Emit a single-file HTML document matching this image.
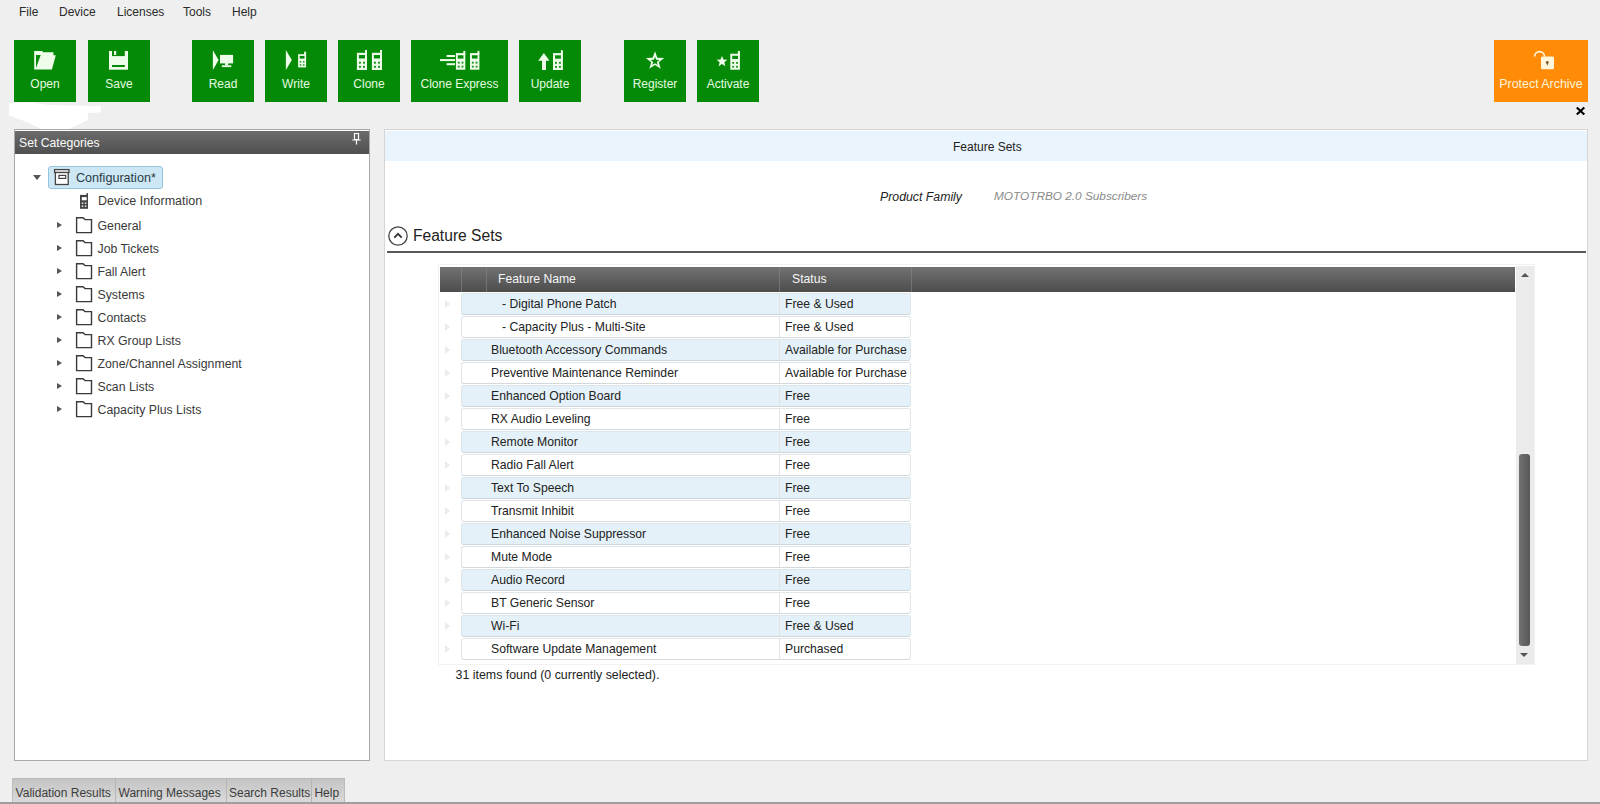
<!DOCTYPE html>
<html><head><meta charset="utf-8">
<style>
*{margin:0;padding:0;box-sizing:border-box}
html,body{width:1600px;height:804px;overflow:hidden;background:#efefef;font-family:"Liberation Sans",sans-serif;color:#222}
.a{position:absolute}
.t{position:absolute;line-height:1;white-space:pre}
.btn{position:absolute;top:40px;height:62px;background:#048a06}
.row{position:absolute;left:461px;width:450px;height:22px;border:1px solid #e2e6e8;border-bottom-color:#d3d8db;border-radius:3px}
.row.b{background:#e4f1f8;border-color:#dbe5ea;border-bottom-color:#cdd7dc}
.ind{position:absolute;left:445px;width:0;height:0;border-top:4px solid transparent;border-bottom:4px solid transparent;border-left:5px solid #ebebeb}
.tri{position:absolute;width:0;height:0;border-top:3.8px solid transparent;border-bottom:3.8px solid transparent;border-left:5.8px solid #555}
</style></head><body>
<div class="t" style="left:19px;top:6.14px;font-size:12px;color:#2a2a2a;">File</div>
<div class="t" style="left:59px;top:6.14px;font-size:12px;color:#2a2a2a;">Device</div>
<div class="t" style="left:117px;top:6.14px;font-size:12px;color:#2a2a2a;">Licenses</div>
<div class="t" style="left:183px;top:6.14px;font-size:12px;color:#2a2a2a;">Tools</div>
<div class="t" style="left:232px;top:6.14px;font-size:12px;color:#2a2a2a;">Help</div>
<div class="btn" style="left:14px;width:62px"></div>
<div class="t" style="left:14px;width:62px;top:77.54px;font-size:12px;color:#e6fbe0;text-align:center">Open</div>
<div class="btn" style="left:88px;width:62px"></div>
<div class="t" style="left:88px;width:62px;top:77.54px;font-size:12px;color:#e6fbe0;text-align:center">Save</div>
<div class="btn" style="left:192px;width:62px"></div>
<div class="t" style="left:192px;width:62px;top:77.54px;font-size:12px;color:#e6fbe0;text-align:center">Read</div>
<div class="btn" style="left:265px;width:62px"></div>
<div class="t" style="left:265px;width:62px;top:77.54px;font-size:12px;color:#e6fbe0;text-align:center">Write</div>
<div class="btn" style="left:338px;width:62px"></div>
<div class="t" style="left:338px;width:62px;top:77.54px;font-size:12px;color:#e6fbe0;text-align:center">Clone</div>
<div class="btn" style="left:411px;width:97px"></div>
<div class="t" style="left:411px;width:97px;top:77.54px;font-size:12px;color:#e6fbe0;text-align:center">Clone Express</div>
<div class="btn" style="left:519px;width:62px"></div>
<div class="t" style="left:519px;width:62px;top:77.54px;font-size:12px;color:#e6fbe0;text-align:center">Update</div>
<div class="btn" style="left:624px;width:62px"></div>
<div class="t" style="left:624px;width:62px;top:77.54px;font-size:12px;color:#e6fbe0;text-align:center">Register</div>
<div class="btn" style="left:697px;width:62px"></div>
<div class="t" style="left:697px;width:62px;top:77.54px;font-size:12px;color:#e6fbe0;text-align:center">Activate</div>
<div class="btn" style="left:1494px;width:94px;background:#ff8b06"></div>
<div class="t" style="left:1494px;width:94px;top:78.00px;font-size:12.4px;color:#fff4d8;text-align:center">Protect Archive</div>
<svg class="a" style="left:0;top:0" width="1600" height="130"><path d="M34.2,50.9 H42.2 L43.2,52.2 H53.4 V55.2 H55.8 L51.9,69.4 H34.2 Z" fill="#eefdea"/><path d="M36,55 H40.7 L36,67.9 Z" fill="#048a06"/><rect x="109" y="51" width="19" height="18.7" fill="#eefdea"/><rect x="112" y="51" width="12.8" height="5.1" fill="#048a06"/><rect x="114" y="51" width="2.2" height="4" fill="#eefdea"/><rect x="112" y="65" width="12.8" height="2" fill="#048a06"/><path d="M212.9,50.2 L218.6,59.9 L212.9,70 Z" fill="#eefdea"/><rect x="220" y="54.9" width="13.1" height="8.5" fill="#eefdea"/><rect x="225.1" y="63" width="3.1" height="2.5" fill="#eefdea"/><rect x="221.8" y="65.3" width="9.5" height="1.8" fill="#eefdea"/><path d="M285.9,50 L291.8,60.1 L285.9,70 Z" fill="#eefdea"/><rect x="298.1" y="54.2" width="8" height="13.2" fill="#eefdea"/><rect x="304.1" y="51.7" width="2" height="3.5" fill="#eefdea"/><rect x="299.70" y="55.92" width="4.80" height="2.64" fill="#048a06"/><rect x="299.70" y="61.06" width="1.60" height="1.45" fill="#048a06" opacity="0.9"/><rect x="299.70" y="64.23" width="1.60" height="1.45" fill="#048a06" opacity="0.9"/><rect x="302.90" y="61.06" width="1.60" height="1.45" fill="#048a06" opacity="0.9"/><rect x="302.90" y="64.23" width="1.60" height="1.45" fill="#048a06" opacity="0.9"/><rect x="356.9" y="52.8" width="10.1" height="17.2" fill="#eefdea"/><rect x="365.0" y="50.0" width="2" height="3.8" fill="#eefdea"/><rect x="358.92" y="55.04" width="6.06" height="3.44" fill="#048a06"/><rect x="358.92" y="61.74" width="2.02" height="1.89" fill="#048a06" opacity="0.9"/><rect x="358.92" y="65.87" width="2.02" height="1.89" fill="#048a06" opacity="0.9"/><rect x="362.96" y="61.74" width="2.02" height="1.89" fill="#048a06" opacity="0.9"/><rect x="362.96" y="65.87" width="2.02" height="1.89" fill="#048a06" opacity="0.9"/><rect x="371.9" y="52.8" width="10.1" height="17.2" fill="#eefdea"/><rect x="380.0" y="50.0" width="2" height="3.8" fill="#eefdea"/><rect x="373.92" y="55.04" width="6.06" height="3.44" fill="#048a06"/><rect x="373.92" y="61.74" width="2.02" height="1.89" fill="#048a06" opacity="0.9"/><rect x="373.92" y="65.87" width="2.02" height="1.89" fill="#048a06" opacity="0.9"/><rect x="377.96" y="61.74" width="2.02" height="1.89" fill="#048a06" opacity="0.9"/><rect x="377.96" y="65.87" width="2.02" height="1.89" fill="#048a06" opacity="0.9"/><rect x="446.6" y="55" width="8.4" height="2" fill="#eefdea"/><rect x="440" y="59.1" width="15" height="2" fill="#eefdea"/><rect x="446.6" y="63.2" width="8.4" height="2" fill="#eefdea"/><rect x="455.9" y="53.1" width="9.4" height="16.6" fill="#eefdea"/><rect x="463.29999999999995" y="50.9" width="2" height="3.2" fill="#eefdea"/><rect x="457.78" y="55.26" width="5.64" height="3.32" fill="#048a06"/><rect x="457.78" y="61.73" width="1.88" height="1.83" fill="#048a06" opacity="0.9"/><rect x="457.78" y="65.72" width="1.88" height="1.83" fill="#048a06" opacity="0.9"/><rect x="461.54" y="61.73" width="1.88" height="1.83" fill="#048a06" opacity="0.9"/><rect x="461.54" y="65.72" width="1.88" height="1.83" fill="#048a06" opacity="0.9"/><rect x="470" y="53.1" width="9.4" height="16.6" fill="#eefdea"/><rect x="477.4" y="50.9" width="2" height="3.2" fill="#eefdea"/><rect x="471.88" y="55.26" width="5.64" height="3.32" fill="#048a06"/><rect x="471.88" y="61.73" width="1.88" height="1.83" fill="#048a06" opacity="0.9"/><rect x="471.88" y="65.72" width="1.88" height="1.83" fill="#048a06" opacity="0.9"/><rect x="475.64" y="61.73" width="1.88" height="1.83" fill="#048a06" opacity="0.9"/><rect x="475.64" y="65.72" width="1.88" height="1.83" fill="#048a06" opacity="0.9"/><path d="M543.9,53.1 L549.5,60.8 H546 V70 H542 V60.8 H538.2 Z" fill="#eefdea"/><rect x="553" y="53.1" width="9.9" height="16.9" fill="#eefdea"/><rect x="560.9" y="50.2" width="2" height="3.9" fill="#eefdea"/><rect x="554.98" y="55.30" width="5.94" height="3.38" fill="#048a06"/><rect x="554.98" y="61.89" width="1.98" height="1.86" fill="#048a06" opacity="0.9"/><rect x="554.98" y="65.94" width="1.98" height="1.86" fill="#048a06" opacity="0.9"/><rect x="558.94" y="61.89" width="1.98" height="1.86" fill="#048a06" opacity="0.9"/><rect x="558.94" y="65.94" width="1.98" height="1.86" fill="#048a06" opacity="0.9"/><path d="M655.00,51.20 L657.35,57.66 L664.23,57.90 L658.80,62.14 L660.70,68.75 L655.00,64.90 L649.30,68.75 L651.20,62.14 L645.77,57.90 L652.65,57.66 Z" fill="#eefdea"/><path d="M655.00,56.70 L656.12,59.76 L659.37,59.88 L656.81,61.89 L657.70,65.02 L655.00,63.20 L652.30,65.02 L653.19,61.89 L650.63,59.88 L653.88,59.76 Z" fill="#048a06"/><path d="M722.00,56.00 L723.47,59.58 L727.33,59.87 L724.38,62.37 L725.29,66.13 L722.00,64.10 L718.71,66.13 L719.62,62.37 L716.67,59.87 L720.53,59.58 Z" fill="#eefdea"/><rect x="730.3" y="53.7" width="9.6" height="16" fill="#eefdea"/><rect x="737.9" y="51.0" width="2" height="3.7" fill="#eefdea"/><rect x="732.22" y="55.78" width="5.76" height="3.20" fill="#048a06"/><rect x="732.22" y="62.02" width="1.92" height="1.76" fill="#048a06" opacity="0.9"/><rect x="732.22" y="65.86" width="1.92" height="1.76" fill="#048a06" opacity="0.9"/><rect x="736.06" y="62.02" width="1.92" height="1.76" fill="#048a06" opacity="0.9"/><rect x="736.06" y="65.86" width="1.92" height="1.76" fill="#048a06" opacity="0.9"/><path d="M1534.6,56.6 A4.95,4.95 0 0 1 1544.5,56.6" fill="none" stroke="#fff6dc" stroke-width="1.7"/><rect x="1541" y="56.5" width="13" height="12.7" rx="1.5" fill="#fff6dc"/><circle cx="1547.3" cy="62.4" r="1.4" fill="#7a5a28"/><path d="M1546.5,62.6 L1548.1,62.6 L1547.6,65.3 L1547,65.3 Z" fill="#7a5a28"/><path d="M1576.8,107.5 L1584.3,114.5 M1584.3,107.5 L1576.8,114.5" stroke="#000" stroke-width="2.1"/><path d="M9,103 L30,102.6 L50,105 L101,106.3 L101,112.6 L88,113 L88,120 L68,129.6 L43,129.6 L24,121 L9,115.5 Z" fill="#fff" opacity="0.97"/></svg>
<div class="a" style="left:14px;top:129px;width:356px;height:632px;background:#fff;border:1px solid #a9a9a9"></div>
<div class="a" style="left:15px;top:131px;width:354px;height:23px;background:linear-gradient(#6c6c6c,#4f4f4f)"></div>
<div class="t" style="left:19px;top:137.17px;font-size:12.2px;color:#fbfbfb;">Set Categories</div>
<svg class="a" style="left:350px;top:132px" width="14" height="16"><path d="M4.5,1.5 H8.5 V7.5 H4.5 Z" fill="none" stroke="#fff" stroke-width="1.2"/><path d="M2.3,8 H10.7 M6.5,8 V12.5" stroke="#fff" stroke-width="1.2"/></svg>
<div class="a" style="left:48px;top:166px;width:115px;height:23px;background:#cde7f4;border:1px solid #92c6df;border-radius:3px"></div>
<div class="a" style="left:33px;top:175px;width:0;height:0;border-left:4px solid transparent;border-right:4px solid transparent;border-top:5.6px solid #555"></div>
<svg class="a" style="left:50px;top:164px" width="24" height="24"><rect x="4.6" y="5.6" width="14.4" height="2.9" fill="#fff" stroke="#444" stroke-width="1.3"/><rect x="5.4" y="8.5" width="12.8" height="12" fill="#fff" stroke="#444" stroke-width="1.3"/><rect x="8.9" y="11.4" width="6.8" height="3" fill="none" stroke="#444" stroke-width="1.2"/></svg>
<div class="t" style="left:76px;top:171.63px;font-size:12.6px;color:#2a3a44;">Configuration*</div>
<svg class="a" style="left:78px;top:191px" width="14" height="20"><rect x="2" y="3.9" width="8" height="13.9" fill="#444"/><rect x="8.5" y="2.1" width="1.5" height="3" fill="#444"/><rect x="3.8" y="6.1" width="4.9" height="3.2" fill="#fff"/><rect x="3.7" y="11.4" width="1.6" height="1.6" fill="#ddd"/><rect x="6.8" y="11.4" width="1.6" height="1.6" fill="#ddd"/><rect x="3.7" y="14.4" width="1.6" height="1.6" fill="#ddd"/><rect x="6.8" y="14.4" width="1.6" height="1.6" fill="#ddd"/></svg>
<div class="t" style="left:98px;top:194.62px;font-size:12.5px;color:#3a3a3a;">Device Information</div>
<div class="tri" style="left:57.2px;top:221.5px"></div>
<svg class="a" style="left:74px;top:215.3px" width="20" height="20"><path d="M2.6,2.8 H9 L11,4.6 H17.5 V17.6 H2.6 Z" fill="none" stroke="#3a3a3a" stroke-width="1.4"/></svg>
<div class="t" style="left:97.5px;top:220.29px;font-size:12.3px;color:#3a3a3a;">General</div>
<div class="tri" style="left:57.2px;top:244.5px"></div>
<svg class="a" style="left:74px;top:238.3px" width="20" height="20"><path d="M2.6,2.8 H9 L11,4.6 H17.5 V17.6 H2.6 Z" fill="none" stroke="#3a3a3a" stroke-width="1.4"/></svg>
<div class="t" style="left:97.5px;top:243.29px;font-size:12.3px;color:#3a3a3a;">Job Tickets</div>
<div class="tri" style="left:57.2px;top:267.5px"></div>
<svg class="a" style="left:74px;top:261.3px" width="20" height="20"><path d="M2.6,2.8 H9 L11,4.6 H17.5 V17.6 H2.6 Z" fill="none" stroke="#3a3a3a" stroke-width="1.4"/></svg>
<div class="t" style="left:97.5px;top:266.29px;font-size:12.3px;color:#3a3a3a;">Fall Alert</div>
<div class="tri" style="left:57.2px;top:290.5px"></div>
<svg class="a" style="left:74px;top:284.3px" width="20" height="20"><path d="M2.6,2.8 H9 L11,4.6 H17.5 V17.6 H2.6 Z" fill="none" stroke="#3a3a3a" stroke-width="1.4"/></svg>
<div class="t" style="left:97.5px;top:289.29px;font-size:12.3px;color:#3a3a3a;">Systems</div>
<div class="tri" style="left:57.2px;top:313.5px"></div>
<svg class="a" style="left:74px;top:307.3px" width="20" height="20"><path d="M2.6,2.8 H9 L11,4.6 H17.5 V17.6 H2.6 Z" fill="none" stroke="#3a3a3a" stroke-width="1.4"/></svg>
<div class="t" style="left:97.5px;top:312.29px;font-size:12.3px;color:#3a3a3a;">Contacts</div>
<div class="tri" style="left:57.2px;top:336.5px"></div>
<svg class="a" style="left:74px;top:330.3px" width="20" height="20"><path d="M2.6,2.8 H9 L11,4.6 H17.5 V17.6 H2.6 Z" fill="none" stroke="#3a3a3a" stroke-width="1.4"/></svg>
<div class="t" style="left:97.5px;top:335.29px;font-size:12.3px;color:#3a3a3a;">RX Group Lists</div>
<div class="tri" style="left:57.2px;top:359.5px"></div>
<svg class="a" style="left:74px;top:353.3px" width="20" height="20"><path d="M2.6,2.8 H9 L11,4.6 H17.5 V17.6 H2.6 Z" fill="none" stroke="#3a3a3a" stroke-width="1.4"/></svg>
<div class="t" style="left:97.5px;top:358.29px;font-size:12.3px;color:#3a3a3a;">Zone/Channel Assignment</div>
<div class="tri" style="left:57.2px;top:382.5px"></div>
<svg class="a" style="left:74px;top:376.3px" width="20" height="20"><path d="M2.6,2.8 H9 L11,4.6 H17.5 V17.6 H2.6 Z" fill="none" stroke="#3a3a3a" stroke-width="1.4"/></svg>
<div class="t" style="left:97.5px;top:381.29px;font-size:12.3px;color:#3a3a3a;">Scan Lists</div>
<div class="tri" style="left:57.2px;top:405.5px"></div>
<svg class="a" style="left:74px;top:399.3px" width="20" height="20"><path d="M2.6,2.8 H9 L11,4.6 H17.5 V17.6 H2.6 Z" fill="none" stroke="#3a3a3a" stroke-width="1.4"/></svg>
<div class="t" style="left:97.5px;top:404.29px;font-size:12.3px;color:#3a3a3a;">Capacity Plus Lists</div>
<div class="a" style="left:384px;top:129px;width:1204px;height:632px;background:#fff;border:1px solid #d6d6d6"></div>
<div class="a" style="left:385px;top:131px;width:1202px;height:30px;background:#eaf4fc"></div>
<div class="t" style="left:953px;top:140.64px;font-size:12.0px;color:#222;">Feature Sets</div>
<div class="t" style="left:880px;top:190.59px;font-size:12.3px;color:#222;font-style:italic">Product Family</div>
<div class="t" style="left:994px;top:191.01px;font-size:11.8px;color:#8a8a8a;font-style:italic">MOTOTRBO 2.0 Subscribers</div>
<svg class="a" style="left:386px;top:224px" width="24" height="24"><circle cx="12" cy="12" r="9.2" fill="none" stroke="#444" stroke-width="1.3"/><path d="M8.3,13.6 L12,9.8 L15.7,13.6" fill="none" stroke="#333" stroke-width="1.8"/></svg>
<div class="t" style="left:413px;top:228.19px;font-size:15.6px;color:#222;">Feature Sets</div>
<div class="a" style="left:387px;top:250.5px;width:1199px;height:2px;background:#585858"></div>
<div class="a" style="left:438px;top:264px;width:1097px;height:401px;border:1px solid #f2f2f2;background:#fff"></div>
<div class="a" style="left:440px;top:267px;width:1075px;height:25px;background:linear-gradient(#727272,#4c4c4c)"></div>
<div class="a" style="left:461px;top:267px;width:1px;height:25px;background:#858585;opacity:.6"></div>
<div class="a" style="left:486px;top:267px;width:1px;height:25px;background:#858585;opacity:.6"></div>
<div class="a" style="left:779px;top:267px;width:1px;height:25px;background:#858585;opacity:.6"></div>
<div class="a" style="left:911px;top:267px;width:1px;height:25px;background:#858585;opacity:.6"></div>
<div class="t" style="left:498px;top:273.27px;font-size:12.2px;color:#f6f6f6;">Feature Name</div>
<div class="t" style="left:792px;top:273.27px;font-size:12.2px;color:#f6f6f6;">Status</div>
<div class="row b" style="top:293px"></div>
<div class="a" style="left:779px;top:294px;width:1px;height:20px;background:#e3e3e3"></div>
<div class="ind" style="top:300px"></div>
<div class="t" style="left:502px;top:297.67px;font-size:12.2px;color:#222;">- Digital Phone Patch</div>
<div class="t" style="left:785px;top:297.67px;font-size:12.2px;color:#222;">Free &amp; Used</div>
<div class="row" style="top:316px"></div>
<div class="a" style="left:779px;top:317px;width:1px;height:20px;background:#e3e3e3"></div>
<div class="ind" style="top:323px"></div>
<div class="t" style="left:502px;top:320.67px;font-size:12.2px;color:#222;">- Capacity Plus - Multi-Site</div>
<div class="t" style="left:785px;top:320.67px;font-size:12.2px;color:#222;">Free &amp; Used</div>
<div class="row b" style="top:339px"></div>
<div class="a" style="left:779px;top:340px;width:1px;height:20px;background:#e3e3e3"></div>
<div class="ind" style="top:346px"></div>
<div class="t" style="left:491px;top:343.67px;font-size:12.2px;color:#222;">Bluetooth Accessory Commands</div>
<div class="t" style="left:785px;top:343.67px;font-size:12.2px;color:#222;">Available for Purchase</div>
<div class="row" style="top:362px"></div>
<div class="a" style="left:779px;top:363px;width:1px;height:20px;background:#e3e3e3"></div>
<div class="ind" style="top:369px"></div>
<div class="t" style="left:491px;top:366.67px;font-size:12.2px;color:#222;">Preventive Maintenance Reminder</div>
<div class="t" style="left:785px;top:366.67px;font-size:12.2px;color:#222;">Available for Purchase</div>
<div class="row b" style="top:385px"></div>
<div class="a" style="left:779px;top:386px;width:1px;height:20px;background:#e3e3e3"></div>
<div class="ind" style="top:392px"></div>
<div class="t" style="left:491px;top:389.67px;font-size:12.2px;color:#222;">Enhanced Option Board</div>
<div class="t" style="left:785px;top:389.67px;font-size:12.2px;color:#222;">Free</div>
<div class="row" style="top:408px"></div>
<div class="a" style="left:779px;top:409px;width:1px;height:20px;background:#e3e3e3"></div>
<div class="ind" style="top:415px"></div>
<div class="t" style="left:491px;top:412.67px;font-size:12.2px;color:#222;">RX Audio Leveling</div>
<div class="t" style="left:785px;top:412.67px;font-size:12.2px;color:#222;">Free</div>
<div class="row b" style="top:431px"></div>
<div class="a" style="left:779px;top:432px;width:1px;height:20px;background:#e3e3e3"></div>
<div class="ind" style="top:438px"></div>
<div class="t" style="left:491px;top:435.67px;font-size:12.2px;color:#222;">Remote Monitor</div>
<div class="t" style="left:785px;top:435.67px;font-size:12.2px;color:#222;">Free</div>
<div class="row" style="top:454px"></div>
<div class="a" style="left:779px;top:455px;width:1px;height:20px;background:#e3e3e3"></div>
<div class="ind" style="top:461px"></div>
<div class="t" style="left:491px;top:458.67px;font-size:12.2px;color:#222;">Radio Fall Alert</div>
<div class="t" style="left:785px;top:458.67px;font-size:12.2px;color:#222;">Free</div>
<div class="row b" style="top:477px"></div>
<div class="a" style="left:779px;top:478px;width:1px;height:20px;background:#e3e3e3"></div>
<div class="ind" style="top:484px"></div>
<div class="t" style="left:491px;top:481.67px;font-size:12.2px;color:#222;">Text To Speech</div>
<div class="t" style="left:785px;top:481.67px;font-size:12.2px;color:#222;">Free</div>
<div class="row" style="top:500px"></div>
<div class="a" style="left:779px;top:501px;width:1px;height:20px;background:#e3e3e3"></div>
<div class="ind" style="top:507px"></div>
<div class="t" style="left:491px;top:504.67px;font-size:12.2px;color:#222;">Transmit Inhibit</div>
<div class="t" style="left:785px;top:504.67px;font-size:12.2px;color:#222;">Free</div>
<div class="row b" style="top:523px"></div>
<div class="a" style="left:779px;top:524px;width:1px;height:20px;background:#e3e3e3"></div>
<div class="ind" style="top:530px"></div>
<div class="t" style="left:491px;top:527.67px;font-size:12.2px;color:#222;">Enhanced Noise Suppressor</div>
<div class="t" style="left:785px;top:527.67px;font-size:12.2px;color:#222;">Free</div>
<div class="row" style="top:546px"></div>
<div class="a" style="left:779px;top:547px;width:1px;height:20px;background:#e3e3e3"></div>
<div class="ind" style="top:553px"></div>
<div class="t" style="left:491px;top:550.67px;font-size:12.2px;color:#222;">Mute Mode</div>
<div class="t" style="left:785px;top:550.67px;font-size:12.2px;color:#222;">Free</div>
<div class="row b" style="top:569px"></div>
<div class="a" style="left:779px;top:570px;width:1px;height:20px;background:#e3e3e3"></div>
<div class="ind" style="top:576px"></div>
<div class="t" style="left:491px;top:573.67px;font-size:12.2px;color:#222;">Audio Record</div>
<div class="t" style="left:785px;top:573.67px;font-size:12.2px;color:#222;">Free</div>
<div class="row" style="top:592px"></div>
<div class="a" style="left:779px;top:593px;width:1px;height:20px;background:#e3e3e3"></div>
<div class="ind" style="top:599px"></div>
<div class="t" style="left:491px;top:596.67px;font-size:12.2px;color:#222;">BT Generic Sensor</div>
<div class="t" style="left:785px;top:596.67px;font-size:12.2px;color:#222;">Free</div>
<div class="row b" style="top:615px"></div>
<div class="a" style="left:779px;top:616px;width:1px;height:20px;background:#e3e3e3"></div>
<div class="ind" style="top:622px"></div>
<div class="t" style="left:491px;top:619.67px;font-size:12.2px;color:#222;">Wi-Fi</div>
<div class="t" style="left:785px;top:619.67px;font-size:12.2px;color:#222;">Free &amp; Used</div>
<div class="row" style="top:638px"></div>
<div class="a" style="left:779px;top:639px;width:1px;height:20px;background:#e3e3e3"></div>
<div class="ind" style="top:645px"></div>
<div class="t" style="left:491px;top:642.67px;font-size:12.2px;color:#222;">Software Update Management</div>
<div class="t" style="left:785px;top:642.67px;font-size:12.2px;color:#222;">Purchased</div>
<div class="a" style="left:1516px;top:266px;width:18px;height:398px;background:#ebebeb"></div>
<div class="a" style="left:1520.6px;top:272.9px;width:0;height:0;border-left:4.1px solid transparent;border-right:4.1px solid transparent;border-bottom:4.4px solid #555"></div>
<div class="a" style="left:1520.4px;top:652.6px;width:0;height:0;border-left:4.6px solid transparent;border-right:4.6px solid transparent;border-top:4.4px solid #555"></div>
<div class="a" style="left:1519.2px;top:454px;width:10.7px;height:192px;border-radius:3px;background:linear-gradient(90deg,#727272,#575757)"></div>
<div class="t" style="left:455.5px;top:669.10px;font-size:12.4px;color:#222;">31 items found (0 currently selected).</div>
<div class="a" style="left:12px;top:778px;width:333px;height:24px;background:linear-gradient(#c4c4c4,#dadada);border:1px solid #bcbcbc;border-bottom:none"></div>
<div class="a" style="left:115px;top:778px;width:1px;height:24px;background:#b4b4b4"></div>
<div class="a" style="left:226px;top:778px;width:1px;height:24px;background:#b4b4b4"></div>
<div class="a" style="left:311px;top:778px;width:1px;height:24px;background:#b4b4b4"></div>
<div class="t" style="left:15.6px;top:786.84px;font-size:12px;color:#3c3c3c;">Validation Results</div>
<div class="t" style="left:118.5px;top:786.84px;font-size:12px;color:#3c3c3c;">Warning Messages</div>
<div class="t" style="left:229px;top:786.84px;font-size:12px;color:#3c3c3c;">Search Results</div>
<div class="t" style="left:314.4px;top:786.84px;font-size:12px;color:#3c3c3c;">Help</div>
<div class="a" style="left:0;top:802px;width:1600px;height:2px;background:#9e9e9e"></div>
</body></html>
